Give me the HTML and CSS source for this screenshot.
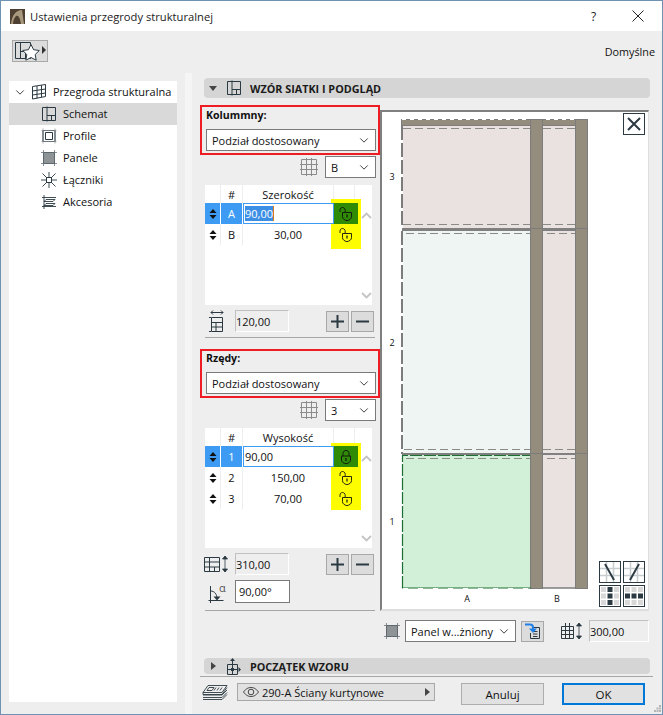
FILE: index.html
```html
<!DOCTYPE html>
<html lang="pl">
<head>
<meta charset="utf-8">
<title>Ustawienia przegrody strukturalnej</title>
<link rel="stylesheet" href="styles.css">
</head>
<body>
<svg class="defs" width="0" height="0" aria-hidden="true">
  <symbol id="i-schema" viewBox="0 0 16 16"><path d="M1.500 1.500h13v13h-13zM6 .5v15M6 9.500h8.500M10.500 9.500v5" fill="none" stroke="#2b3a42"/></symbol>
  <symbol id="i-unlock" viewBox="0 0 14 16"><path d="M1 6V4.200C1 2.400 2.200 1.500 3.500 1.500S6 2.400 6.200 4.200V6" fill="none" stroke="#111" stroke-width=".9"/><path d="M3.500 6.500h9v4.200c0 2-2 3.400-4.500 4-2.500-.6-4.500-2-4.500-4z" fill="none" stroke="#111" stroke-width=".9"/><path d="M8 8.500v3" stroke="#111" stroke-width="1.200"/></symbol>
  <symbol id="i-lock" viewBox="0 0 14 16"><path d="M4 7V4.200C4 2.500 5.500 1.500 7 1.500s3 1 3 2.700V7" fill="none" stroke="#111" stroke-width=".9"/><path d="M2.500 7h9v4.200c0 2-2 3-4.500 3.500-2.500-.5-4.500-1.500-4.500-3.500z" fill="none" stroke="#111" stroke-width=".9"/><path d="M7 9v3" stroke="#111" stroke-width="1.200"/></symbol>
  <symbol id="i-updown" viewBox="0 0 8 12"><path d="M4 1 7.500 5H.5zM4 11 .5 7h7z" fill="#111"/></symbol>
  <symbol id="i-chev" viewBox="0 0 12 8"><path d="M1.500 1.500 6 6l4.500-4.500" fill="none" stroke="#444" stroke-width="1.200"/></symbol>
  <symbol id="i-grid" viewBox="0 0 20 20"><path d="M2.500 2.500h15v15h-15zM7.500 1v18M12.500 1v18M1 7.500h18M1 12.500h18" fill="none" stroke="#8b8b8b"/></symbol>
  <symbol id="i-panel" viewBox="0 0 16 16"><rect x="2.500" y="2.500" width="11" height="11" fill="#8e9396" stroke="#2b3a42"/><path d="M2.500 0v16M13.500 0v16M0 2.500h16M0 13.500h16" stroke="#6a7478" stroke-width=".8"/></symbol>
  <symbol id="i-plus" viewBox="0 0 13 13"><path d="M0 6.500h13M6.500 0v13" stroke="#2b3a42" stroke-width="2"/></symbol>
  <symbol id="i-minus" viewBox="0 0 13 13"><path d="M0 6.500h13" stroke="#2b3a42" stroke-width="2"/></symbol>
</svg>
<div class="window">
  <header class="titlebar">
    <svg class="app-icon" width="15" height="15" viewBox="0 0 15 15"><rect width="15" height="15" fill="#4e4030"/><path d="M1 15C2 6 6 1 12 1l2 14h-3C10 8 8 6 6 7 4 9 3 12 3 15z" fill="#a8997e"/></svg>
    <span class="title-text">Ustawienia przegrody strukturalnej</span>
    <span class="title-help">?</span>
    <svg class="title-close" width="12" height="12" viewBox="0 0 12 12"><path d="M.5.500l11 11M11.500.500l-11 11" stroke="#222" stroke-width="1"/></svg>
  </header>
  <div class="toolbar">
    <button class="fav-btn">
      <svg width="34" height="20" viewBox="0 0 34 20"><path d="M2.500 1.500h15v16h-15zM7.500 1v17M7.500 10.500h10M12.500 10.500v7" fill="none" stroke="#2b3a42"/><path d="M18 6l2.600 5.200 5.700.8-4.100 4 1 5.700L18 19l-5.200 2.700 1-5.700-4.100-4 5.700-.8z" transform="translate(0 -2.500)" fill="#fff" stroke="#2b3a42"/><path d="M29 5l4 4-4 4z" fill="#333"/></svg>
    </button>
    <span class="defaults">Domyślne</span>
  </div>
  <main class="main">
    <nav class="tree-side">
      <ul class="tree">
        <li class="tree-row tree-root">
          <svg class="tree-chev" width="10" height="7"><use href="#i-chev"/></svg>
          <svg width="16" height="16" viewBox="0 0 16 16"><path d="M1.500 2.500 14.500.5v12L1.500 15zM6 2v12.500M10.500 1.200v12M1.500 7 14.500 5M1.500 11 14.500 9" fill="none" stroke="#2b3a42"/></svg>
          <span>Przegroda strukturalna</span>
        </li>
        <li class="tree-row tree-child is-current"><svg width="16" height="16"><use href="#i-schema"/></svg><span>Schemat</span></li>
        <li class="tree-row tree-child">
          <svg width="16" height="16" viewBox="0 0 16 16"><path d="M2 2.500h12v11H2z" fill="none" stroke="#2b3a42" stroke-width="1.200"/><path d="M4.500 4.500h7v7h-7z" fill="none" stroke="#2b3a42"/><path d="M.5 2.500h15M.5 13.500h15M2 .5v15M14 .5v15" stroke="#8a9296" stroke-width=".7"/></svg>
          <span>Profile</span>
        </li>
        <li class="tree-row tree-child"><svg width="16" height="16"><use href="#i-panel"/></svg><span>Panele</span></li>
        <li class="tree-row tree-child">
          <svg width="16" height="16" viewBox="0 0 16 16"><path d="M1.500 1.500 14.500 14.500M14.500 1.500 1.500 14.500M8 0v16M0 8h16" stroke="#2b3a42" stroke-width=".9"/><rect x="5.500" y="5.500" width="5" height="5" fill="#fff" stroke="#2b3a42"/></svg>
          <span>Łączniki</span>
        </li>
        <li class="tree-row tree-child">
          <svg width="16" height="16" viewBox="0 0 16 16"><path d="M1 3.500h14M3 1v14M1 12.500h14M5 5.500h9l-2 2H3zM5 9.500h9l-2 2H3z" fill="none" stroke="#2b3a42" stroke-width=".9"/></svg>
          <span>Akcesoria</span>
        </li>
      </ul>
    </nav>
    <section class="pane">
      <div class="section-bar section-top">
        <svg width="8" height="5" viewBox="0 0 8 5"><path d="M0 0h8L4 5z" fill="#444"/></svg>
        <svg class="section-icon" width="16" height="16"><use href="#i-schema"/></svg>
        <strong>WZÓR SIATKI I PODGLĄD</strong>
      </div>
      <div class="workspace">
        <div class="controls">
          <div class="redbox">
            <label class="redbox-label">Kolummny:</label>
            <div class="select select-wide"><span>Podział dostosowany</span><svg width="10" height="7"><use href="#i-chev"/></svg></div>
          </div>
          <div class="pick-row">
            <svg width="20" height="20"><use href="#i-grid"/></svg>
            <div class="select select-small"><span>B</span><svg width="10" height="7"><use href="#i-chev"/></svg></div>
          </div>
          <div class="table-box">
            <div class="yellow yellow-cols"></div>
            <div class="grid-table">
              <div class="cell head"></div><div class="cell head">#</div><div class="cell head">Szerokość</div><div class="cell head head-last"></div>
              <div class="cell active"><svg width="8" height="12"><use href="#i-updown"/></svg></div>
              <div class="cell active">A</div>
              <div class="cell edit"><span class="selected">90,00</span></div>
              <div class="cell lock-cell locked"><svg width="14" height="16"><use href="#i-unlock"/></svg></div>
              <div class="cell"><svg width="8" height="12"><use href="#i-updown"/></svg></div>
              <div class="cell">B</div>
              <div class="cell">30,00</div>
              <div class="cell lock-cell"><svg width="14" height="16"><use href="#i-unlock"/></svg></div>
            </div>
            <svg class="scroll scroll-up" width="11" height="7" viewBox="0 0 11 7"><path d="M1 6l4.500-4.500L10 6" fill="none" stroke="#c4c4c4" stroke-width="1.800"/></svg>
            <svg class="scroll scroll-down" width="11" height="7" viewBox="0 0 11 7"><path d="M1 1l4.500 4.500L10 1" fill="none" stroke="#c4c4c4" stroke-width="1.800"/></svg>
          </div>
          <div class="sum-row">
            <svg class="sum-icon" width="18" height="22" viewBox="0 0 18 22"><path d="M3.500 7.500h11v14h-11zM3.500 12.500h11M3.500 17h11M8 12.500v9M1 7.500h2M1 21.500h2" fill="none" stroke="#2b3a42"/><path d="M3 2.500h12M3 2.500l2-2M3 2.500l2 2M15 2.500l-2-2M15 2.500l-2 2" fill="none" stroke="#2b3a42"/></svg>
            <div class="field readonly">120,00</div>
            <div class="pm">
              <button class="pm-btn"><svg width="13" height="13"><use href="#i-plus"/></svg></button>
              <button class="pm-btn"><svg width="13" height="13"><use href="#i-minus"/></svg></button>
            </div>
          </div>
          <div class="rule"></div>
          <div class="redbox redbox-rows">
            <label class="redbox-label">Rzędy:</label>
            <div class="select select-wide"><span>Podział dostosowany</span><svg width="10" height="7"><use href="#i-chev"/></svg></div>
          </div>
          <div class="pick-row">
            <svg width="20" height="20"><use href="#i-grid"/></svg>
            <div class="select select-small"><span>3</span><svg width="10" height="7"><use href="#i-chev"/></svg></div>
          </div>
          <div class="table-box">
            <div class="yellow yellow-rows"></div>
            <div class="grid-table">
              <div class="cell head"></div><div class="cell head">#</div><div class="cell head">Wysokość</div><div class="cell head head-last"></div>
              <div class="cell active"><svg width="8" height="12"><use href="#i-updown"/></svg></div>
              <div class="cell active">1</div>
              <div class="cell edit">90,00</div>
              <div class="cell lock-cell locked"><svg width="14" height="16"><use href="#i-lock"/></svg></div>
              <div class="cell"><svg width="8" height="12"><use href="#i-updown"/></svg></div>
              <div class="cell">2</div>
              <div class="cell">150,00</div>
              <div class="cell lock-cell"><svg width="14" height="16"><use href="#i-unlock"/></svg></div>
              <div class="cell"><svg width="8" height="12"><use href="#i-updown"/></svg></div>
              <div class="cell">3</div>
              <div class="cell">70,00</div>
              <div class="cell lock-cell"><svg width="14" height="16"><use href="#i-unlock"/></svg></div>
            </div>
            <svg class="scroll scroll-up" width="11" height="7" viewBox="0 0 11 7"><path d="M1 6l4.500-4.500L10 6" fill="none" stroke="#c4c4c4" stroke-width="1.800"/></svg>
            <svg class="scroll scroll-down" width="11" height="7" viewBox="0 0 11 7"><path d="M1 1l4.500 4.500L10 1" fill="none" stroke="#c4c4c4" stroke-width="1.800"/></svg>
          </div>
          <div class="sum-row">
            <svg class="sum-icon sum-icon-h" width="26" height="18" viewBox="0 0 26 18"><path d="M.5 2.500h15v14H.5zM.5 7h15M.5 12h15M5.500 2.500v14M10.500 12v4.500" fill="none" stroke="#2b3a42"/><path d="M21 1v16M21 1l-2.500 3h5zM21 17l-2.500-3h5z" fill="#2b3a42" stroke="#2b3a42" stroke-width=".8"/></svg>
            <div class="field readonly">310,00</div>
            <div class="pm">
              <button class="pm-btn"><svg width="13" height="13"><use href="#i-plus"/></svg></button>
              <button class="pm-btn"><svg width="13" height="13"><use href="#i-minus"/></svg></button>
            </div>
          </div>
          <div class="angle-row">
            <svg class="angle-icon" width="20" height="20" viewBox="0 0 20 20"><path d="M2.500 3v17M.5 17.500h15M2.500 8c4 0 6.500 3 6.500 8" fill="none" stroke="#2b3a42"/><path d="M5.500 13.500h7L9 17.500z" fill="#2b3a42"/></svg>
            <span class="alpha">α</span>
            <div class="field angle-field">90,00°</div>
          </div>
          <div class="rule"></div>
        </div>
        <div class="viewer">
          <div class="preview">
            <svg class="canvas" width="267" height="499" viewBox="381 111 267 499">
              <rect x="403" y="126" width="128" height="102" fill="#eae2e1"/>
              <rect x="403" y="231" width="128" height="223" fill="#eff5f2"/>
              <rect x="403" y="455" width="128" height="133" fill="#d2efd8"/>
              <rect x="543" y="126" width="32" height="462" fill="#eae2e1"/>
              <rect x="401.500" y="119.500" width="186" height="6" fill="#948c7c" stroke="#7c7c7c"/>
              <path d="M402 119.500H588" stroke="#fff" stroke-width="1" stroke-dasharray="4 4" fill="none"/>
              <rect x="402" y="228" width="186" height="3" fill="#808080"/>
              <rect x="402" y="453" width="186" height="2" fill="#808080"/>
              <rect x="530.500" y="119.500" width="12" height="469" fill="#948c7c" stroke="#7c7c7c"/>
              <rect x="575.500" y="119.500" width="12" height="469" fill="#948c7c" stroke="#7c7c7c"/>
              <path d="M530 228.500h13M575 228.500h13M530 453.500h13M575 453.500h13" stroke="#7c7c7c" fill="none"/>
              <path d="M403 128.500H530M543 128.500H575M403 224.500H530M543 224.500H575M406 233.500H530M547 233.500H575M404 449.500H530M543 449.500H575M406 458.500H530M547 458.500H575" stroke="#8a8a86" stroke-dasharray="8 4" fill="none"/>
              <path d="M402 126V228M402 231V454" stroke="#7c7c7c" stroke-width="2" stroke-dasharray="14 3" fill="none"/>
              <path d="M402.500 588V455.500H530" stroke="#1c6f30" stroke-width="1.200" stroke-dasharray="12 2" fill="none"/>
              <path d="M402 588H531" stroke="#1c6f30" stroke-width="1.200" fill="none"/>
              <path d="M403 588.500H531" stroke="#fff" stroke-dasharray="5 10" fill="none"/>
              <path d="M543 588H575" stroke="#7c7c7c" stroke-width="1.500" fill="none"/>
              <text x="392" y="180" class="axis" text-anchor="middle">3</text>
              <text x="392" y="346" class="axis" text-anchor="middle">2</text>
              <text x="392" y="525" class="axis" text-anchor="middle">1</text>
              <text x="467" y="602" class="axis" text-anchor="middle">A</text>
              <text x="557" y="602" class="axis" text-anchor="middle">B</text>
            </svg>
            <button class="close-preview"><svg width="16" height="16" viewBox="0 0 16 16"><path d="M2 2l12 12M14 2 2 14" stroke="#2b3a42" stroke-width="2"/></svg></button>
            <div class="view-btns">
              <button class="view-btn"><svg width="20" height="20" viewBox="0 0 20 20"><path d="M0 6.500h20M0 13.500h20M6.500 0v20M13.500 0v20" stroke="#c8ced0" stroke-width="1.500"/><path d="M5 2l9 16" stroke="#2b3a42" stroke-width="2"/></svg></button>
              <button class="view-btn"><svg width="20" height="20" viewBox="0 0 20 20"><path d="M0 6.500h20M0 13.500h20M6.500 0v20M13.500 0v20" stroke="#c8ced0" stroke-width="1.500"/><path d="M15 2 6 18" stroke="#2b3a42" stroke-width="2"/></svg></button>
              <button class="view-btn"><svg width="20" height="20" viewBox="0 0 20 20"><path d="M1 1h5v5H1zM14 1h5v5h-5zM1 7.500h5v5H1zM14 7.500h5v5h-5zM1 14h5v5H1zM14 14h5v5h-5z" fill="#d8d8d8"/><path d="M7.500 1h5v5h-5zM7.500 7.500h5v5h-5zM7.500 14h5v5h-5z" fill="#2b3a42"/></svg></button>
              <button class="view-btn"><svg width="20" height="20" viewBox="0 0 20 20"><path d="M1 1h5v5H1zM7.500 1h5v5h-5zM14 1h5v5h-5zM1 14h5v5H1zM7.500 14h5v5h-5zM14 14h5v5h-5z" fill="#d8d8d8"/><path d="M1 7.500h5v5H1zM7.500 7.500h5v5h-5zM14 7.500h5v5h-5z" fill="#2b3a42"/></svg></button>
            </div>
          </div>
          <div class="panel-row">
            <svg class="panel-icon" width="16" height="16"><use href="#i-panel"/></svg>
            <div class="select select-panel"><span>Panel w...żniony</span><svg width="10" height="7"><use href="#i-chev"/></svg></div>
            <button class="apply-btn"><svg width="18" height="18" viewBox="0 0 18 18"><path d="M8.500 5.500h7v11h-9V11M9 9.500h4.500M9 12h4.500M9 14.500h4.500" fill="none" stroke="#2b3a42"/><path d="M1 2.500h5c2 0 3 1 3 3v2" fill="none" stroke="#1e80e8" stroke-width="2"/><path d="M5 6.500h8L9 11z" fill="#1e80e8"/></svg></button>
            <svg class="height-icon" width="22" height="18" viewBox="0 0 22 18"><path d="M1.500 4.500h12v12h-12zM1.500 8.500h12M1.500 12.500h12M5.500 1v15.500M9.500 1v15.500" fill="none" stroke="#2b3a42"/><path d="M19 1v16M19 1l-2.500 3h5zM19 17l-2.500-3h5z" fill="#2b3a42" stroke="#2b3a42" stroke-width=".8"/></svg>
            <div class="field readonly field-height">300,00</div>
          </div>
        </div>
      </div>
      <div class="section-bar section-origin">
        <svg width="5" height="8" viewBox="0 0 5 8"><path d="M0 0l5 4-5 4z" fill="#444"/></svg>
        <svg class="section-icon" width="16" height="17" viewBox="0 0 16 17"><path d="M1.500 6.500h10v10h-10zM6.500 2v14.500M1.500 11.500h10" fill="none" stroke="#2b3a42"/><path d="M6.500 0 4 3h5zM15 11.500 12.500 9v5z" fill="#2b3a42"/><rect x="5" y="10" width="3" height="3" fill="#2b3a42"/></svg>
        <strong>POCZĄTEK WZORU</strong>
      </div>
      <div class="footer-rule"></div>
      <footer class="footer">
        <svg class="layers-icon" width="26" height="15" viewBox="0 0 26 15"><path d="M6 .5h19l-5 7H1zM1 7.500v2h19l5-7M1 10h19l5-5M1 12.500h19l5-5M1 14.500h19l5-5M7 2.500h5l-2 3H5zM14 2.500l-2 3M17 2.500l-2 3M20 2.500l-2 3" fill="none" stroke="#2b3a42" stroke-width=".9"/></svg>
        <div class="layer-select">
          <svg width="16" height="10" viewBox="0 0 16 10"><path d="M.5 5C3 1.500 5.500.5 8 .5s5 1 7.500 4.500C13 8.500 10.500 9.500 8 9.500S3 8.500.5 5z" fill="none" stroke="#444"/><circle cx="8" cy="5" r="2.800" fill="none" stroke="#444"/></svg>
          <span>290-A Ściany kurtynowe</span>
          <svg class="layer-arrow" width="5" height="8" viewBox="0 0 5 8"><path d="M0 0l5 4-5 4z" fill="#444"/></svg>
        </div>
        <button class="action">Anuluj</button>
        <button class="action action-ok">OK</button>
      </footer>
    </section>
    <svg class="grip" width="7" height="7" viewBox="0 0 7 7"><path d="M5 0h2v2H5zM2.500 2.500h2v2h-2zM5 2.500h2v2H5zM0 5h2v2H0zM2.500 5h2v2h-2zM5 5h2v2H5z" fill="#b5b5b5"/></svg>
  </main>
</div>
</body>
</html>
```
FILE: styles.css
```css
* { box-sizing: border-box; }
html, body { margin: 0; padding: 0; background: #eee; }
body { font-family: "Open Sans", "Noto Sans", "Liberation Sans", sans-serif; font-size: 11px; color: #111; }
.defs { position: absolute; }
svg { display: block; flex: none; }
button { font: inherit; color: inherit; padding: 0; margin: 0; }
ul { list-style: none; margin: 0; padding: 0; }

.window { width: 663px; height: 715px; border: 1px solid #6f92b2; background: #eee; display: flex; flex-direction: column; overflow: hidden; }
.titlebar { height: 30px; background: #fff; display: flex; align-items: center; padding-left: 9px; flex: none; }
.title-text { margin-left: 5px; font-size: 11.2px; color: #222; }
.title-help { margin-left: auto; font-size: 12px; color: #222; width: 8px; }
.title-close { margin-left: 33px; margin-right: 18px; }

.toolbar { height: 42px; flex: none; display: flex; align-items: flex-start; justify-content: space-between; padding: 9px 7px 0 11px; }
.fav-btn { width: 36px; height: 22px; background: #dcdcdc; border: 1px solid #a8a8a8; display: flex; align-items: center; justify-content: center; }
.defaults { margin-top: 4px; font-size: 10.8px; }

.main { flex: 1; display: flex; position: relative; min-height: 0; }
.tree-side { width: 184px; flex: none; padding: 8px 8px 12px 8px; }
.tree { background: #fff; height: 100%; }
.tree-row { height: 22px; display: flex; align-items: center; font-size: 11px; }
.tree-root { padding-left: 6px; }
.tree-chev { margin-right: 6px; }
.tree-row span { margin: 0 0 2px 6px; }
.tree-child { padding-left: 32px; }
.is-current { background: #d9d9d9; }

.pane { width: 477px; flex: none; border-left: 7px solid #f5f5f5; padding: 5px 12px 0 12px; }
.section-bar { height: 20px; background: #d5d5d5; border-radius: 4px; display: flex; align-items: center; padding-left: 5px; font-size: 10.8px; }
.section-bar strong { font-weight: 700; margin-left: 8px; color: #1b1b1b; }
.section-icon { margin-left: 9px; }
.section-origin { height: 16px; margin-top: 16px; padding-left: 7px; }
.section-origin .section-icon { margin-left: 10px; }

.workspace { display: flex; margin-left: -4px; width: 450px; padding-top: 7px; }
.controls { width: 180px; flex: none; }
.redbox { height: 50px; border: 2px solid #f01c24; padding: 2px 4px 0; }
.redbox-label { display: block; height: 20px; font-weight: 700; font-size: 10.6px; line-height: 12px; }
.redbox-rows { height: 49px; margin-top: 11px; padding-top: 1px; }
.select { background: #fff; border: 1px solid #7a7a7a; display: flex; align-items: center; justify-content: space-between; height: 22px; padding: 0 6px 0 5px; font-size: 11px; }
.select-wide { width: 170px; }
.pick-row { display: flex; justify-content: flex-end; align-items: center; gap: 6px; margin-top: 1px; padding-right: 4px; }
.select-small { width: 51px; }

.table-box { position: relative; width: 167px; height: 120px; margin: 7px 0 0 5px; background: #fff; }
.grid-table { display: grid; grid-template-columns: 16px 22px 91px 24px; grid-auto-rows: 21px; grid-template-rows: 18px; }
.cell { display: flex; align-items: center; justify-content: center; border-right: 1px solid #eee; font-size: 11px; }
.head { border-right: 1px solid #eee; }
.head-last { margin-right: 3px; }
.active { background: #3d9bf3; color: #fff; border-right-color: #fff; }
.edit { position: relative; z-index: 2; background: #fff; border: 1px solid #3d9bf3; justify-content: flex-start; padding-left: 1px; height: 21px; }
.selected { background: #3d8fe6; color: #fff; border-right: 1px solid #d97a1c; }
.lock-cell { position: relative; z-index: 1; border-right: 0; }
.locked { background: #2f8a06; }
.yellow { position: absolute; left: 126px; width: 30px; background: #fdfd00; }
.yellow-cols { top: 14px; height: 50px; }
.yellow-rows { top: 15px; height: 67px; }
.scroll { position: absolute; left: 156px; }
.scroll-up { top: 27px; }
.scroll-down { bottom: 6px; }

.sum-row { display: flex; align-items: center; margin: 5px 0 0 8px; height: 22px; }
.sum-icon { margin-right: 9px; width: 18px; }
.sum-icon-h { width: 26px; margin-left: -4px; margin-right: 5px; }
.field { width: 54px; height: 22px; display: flex; align-items: center; padding-left: 0; font-size: 11px; }
.readonly { border: 1px solid; border-color: #c0c0c0 #fff #fff #c0c0c0; background: #eee; }
.pm { margin-left: auto; margin-right: 6px; display: flex; gap: 2px; }
.pm-btn { width: 23px; height: 21px; background: #dcdcdc; border: 1px solid #a8a8a8; display: flex; align-items: center; justify-content: center; }
.angle-row { display: flex; align-items: center; margin: 5px 0 0 8px; height: 23px; }
.angle-icon { margin-top: 2px; }
.alpha { width: 7px; margin: -7px 0 0 -9px; font-size: 11px; line-height: 12px; color: #555; }
.angle-field { background: #fff; border: 1px solid #7a7a7a; padding-left: 3px; height: 23px; width: 55px; margin-left: 9px; }
.rule { height: 1px; background: #a6a6a6; margin: 5px 5px 0; }
.angle-row + .rule { margin-top: 7px; }

.viewer { width: 269px; flex: none; margin-top: 5px; }
.preview { position: relative; height: 501px; background: #fff; border: 2px solid #dedede; border-top-color: #7f7f7f; border-left-color: #7f7f7f; border-right-width: 1px; }
.canvas { position: absolute; left: -1px; top: -1px; }
.axis { font: 9px "Open Sans", sans-serif; fill: #111; }
.close-preview { position: absolute; left: 241px; top: 1px; width: 22px; height: 22px; background: #fff; border: 1px solid #2b3a42; display: flex; align-items: center; justify-content: center; }
.view-btns { position: absolute; left: 217px; top: 449px; width: 46px; display: grid; grid-template-columns: 22px 22px; gap: 2px; }
.view-btn { width: 22px; height: 22px; background: #fff; border: 1px solid #2b3a42; display: flex; align-items: center; justify-content: center; }

.panel-row { display: flex; align-items: center; height: 22px; margin-top: 9px; padding-left: 4px; }
.select-panel { width: 111px; margin-left: 5px; }
.apply-btn { width: 23px; height: 21px; margin-left: 5px; background: #dcdcdc; border: 1px solid #a8a8a8; display: flex; align-items: center; justify-content: center; }
.height-icon { margin-left: 16px; margin-right: 7px; }
.field-height { width: 60px; }

.footer-rule { height: 1px; background: #a6a6a6; margin: 2px -3px 0 -4px; }
.footer { display: flex; align-items: flex-start; margin: 6px 0 0 -2px; }
.layers-icon { margin-top: 2px; }
.layer-select { width: 198px; height: 18px; margin-left: 9px; background: #e1e1e1; border: 1px solid #a8a8a8; display: flex; align-items: center; padding: 0 4px 0 5px; gap: 3px; font-size: 11px; }
.layer-arrow { margin-left: auto; }
.action { width: 83px; height: 22px; background: #e1e1e1; border: 1px solid #adadad; font-size: 11.5px; margin-left: 26px; }
.action-ok { margin-left: 18px; border: 2px solid #0078d7; }
.grip { position: absolute; right: 1px; bottom: 2px; }
```
